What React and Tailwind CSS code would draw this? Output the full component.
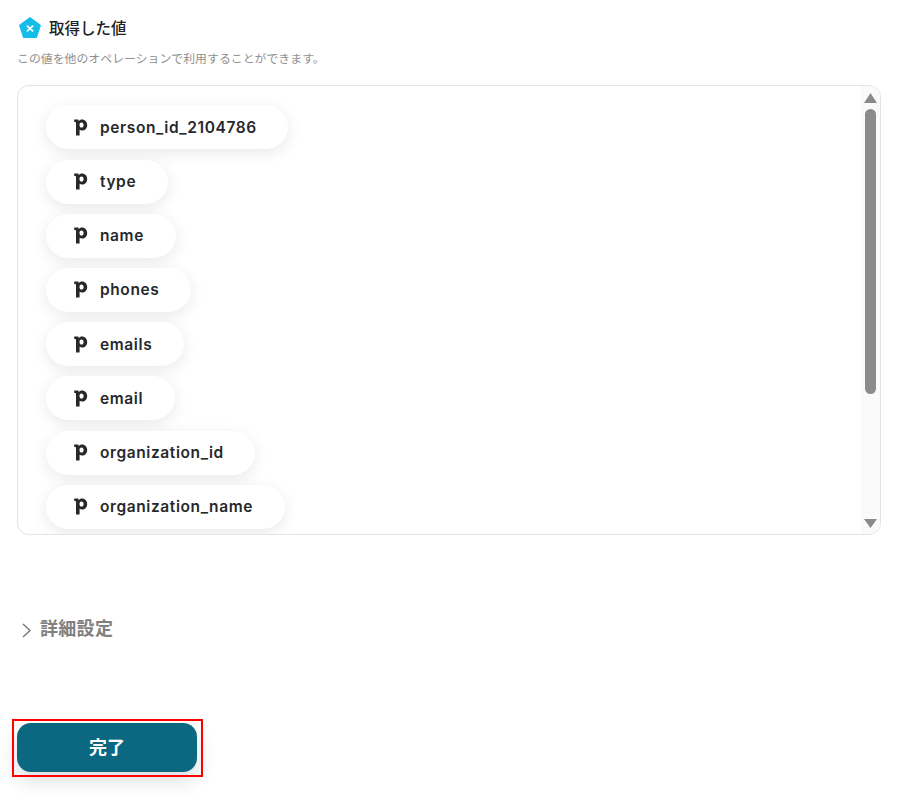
import React from 'react';

const values = [
  { name: 'person_id_2104786', width: 'w-[242px]' },
  { name: 'type', width: 'w-[122px]' },
  { name: 'name', width: 'w-[130px]' },
  { name: 'phones', width: 'w-[145px]' },
  { name: 'emails', width: 'w-[138px]' },
  { name: 'email', width: 'w-[129px]' },
  { name: 'organization_id', width: 'w-[209px]' },
  { name: 'organization_name', width: 'w-[239px]' },
];

function PipedriveIcon() {
  return (
    <svg viewBox="0 0 14 17" className="w-[14px] h-[17px] shrink-0 text-[#26292c]" fill="currentColor">
      <path fillRule="evenodd" d="M0.2 0.6H4.4L4.7 1.9C5.5 1 6.6 0.4 8 0.4C11 0.4 13.2 2.7 13.2 6C13.2 9.3 11 11.6 8.1 11.6C7 11.6 6.2 11.3 5.6 10.8V16.4H2V3.8C2 3.2 1.8 3 1.3 3H0.2ZM7.4 3.4C6.1 3.4 5.5 4.5 5.5 6C5.5 7.5 6.1 8.6 7.4 8.6C8.8 8.6 9.6 7.6 9.6 6C9.6 4.4 8.8 3.4 7.4 3.4Z" />
    </svg>
  );
}

function ValuePill({ name, width }) {
  return (
    <div className={`${width} h-[44px] shrink-0 flex items-center pl-[28px] bg-white rounded-full shadow-[0_4px_16px_rgba(0,0,0,0.09)]`}>
      <PipedriveIcon />
      <span className="ml-[12px] text-[15.5px] font-semibold tracking-[0.6px] text-[#26292c]">{name}</span>
    </div>
  );
}

export default function App() {
  return (
    <div className="w-[898px] h-[797px] bg-white overflow-hidden font-['Inter','Noto_Sans_CJK_JP',sans-serif]">
      {/* header */}
      <div className="pl-[19px] pt-[17px] flex items-center h-[39px]">
        <svg viewBox="0 0 22 22" className="w-[22px] h-[22px] shrink-0">
          <path d="M11 0.8L21.2 8.2L17.4 20.4H4.6L0.8 8.2Z" fill="#14bde8" stroke="#14bde8" strokeWidth="1.4" strokeLinejoin="round" />
          <path d="M8.4 9.2L13.6 13.8M13.6 9.2L8.4 13.8" stroke="#fff" strokeWidth="1.8" strokeLinecap="round" />
        </svg>
        <h2 className="ml-[8px] mt-[1px] text-[15.5px] font-medium leading-[22px] text-[#222]">取得した値</h2>
      </div>
      <p className="ml-[17px] mt-[12px] text-[11.9px] leading-[16px] text-[#8f8f8f]">この値を他のオペレーションで利用することができます。</p>

      {/* values box */}
      <div className="ml-[17px] mt-[18px] w-[864px] h-[450px] flex rounded-[12px] border border-[#e4e4e4] overflow-hidden">
        <div className="flex-1 min-w-0 h-full overflow-hidden pt-[19.4px] pl-[28px] flex flex-col gap-[10.2px]">
          {values.map((v) => (
            <ValuePill key={v.name} name={v.name} width={v.width} />
          ))}
        </div>
        <div className="w-[19px] h-full bg-[#fafafa] flex flex-col items-center pt-[7px]">
          <svg viewBox="0 0 13 10" className="w-[13px] h-[10px] shrink-0" fill="#8a8a8a">
            <path d="M6.5 0L13 10H0Z" />
          </svg>
          <div className="w-[11px] h-[285px] mt-[6px] rounded-full bg-[#8a8a8a]" />
          <svg viewBox="0 0 13 9" className="w-[13px] h-[9px] mt-[125px] shrink-0" fill="#8a8a8a">
            <path d="M0 0H13L6.5 9Z" />
          </svg>
        </div>
      </div>

      {/* advanced settings */}
      <div className="mt-[81px] ml-[22px] flex items-center h-[24px]">
        <svg viewBox="0 0 9 15" className="w-[9px] h-[15px] mt-[4px] shrink-0" fill="none" stroke="#777" strokeWidth="1.4">
          <path d="M1 1L8 7.5L1 14" />
        </svg>
        <span className="ml-[9px] text-[18px] tracking-[0.3px] font-bold text-[#808080]">詳細設定</span>
      </div>

      {/* submit, with the red highlight lying over it */}
      <div className="relative ml-[17px] mt-[83px] w-[180px] h-[49px]">
        <button className="w-full h-full rounded-[14px] bg-[#0b6880] text-white text-[18px] font-bold shadow-[0_8px_20px_rgba(0,40,60,0.16)]">完了</button>
        <div className="absolute -left-[5px] -top-[4px] w-[191px] h-[58px] border-2 border-[#f00] pointer-events-none" />
      </div>
    </div>
  );
}
